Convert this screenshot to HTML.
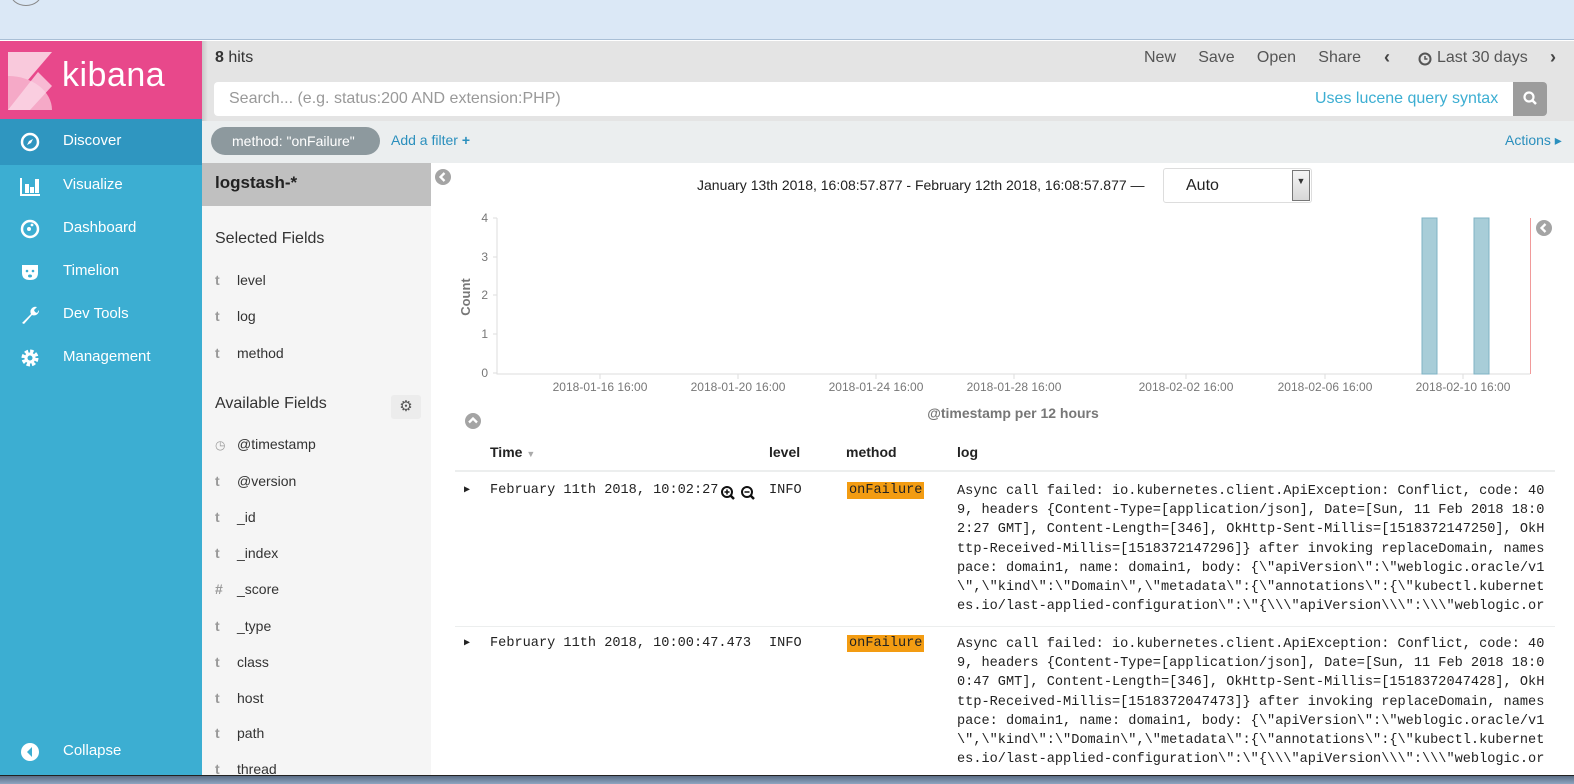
<!DOCTYPE html>
<html><head><meta charset="utf-8"><style>
*{margin:0;padding:0;box-sizing:border-box}
body{width:1574px;height:784px;overflow:hidden;position:relative;font-family:"Liberation Sans",sans-serif;background:#fff;color:#333}
.a{position:absolute}
.nav{left:0;width:202px;height:46px;color:#fff;font-size:15px}
.nav span{position:absolute;left:63px;top:13px}
.nav svg{position:absolute;left:20px;top:13px}
.fld{left:215px;font-size:14px;color:#333}
.fld b{display:inline-block;width:22px;color:#999;font-weight:bold}
.mono{font-family:"Liberation Mono",monospace;font-size:13.6px;color:#222}
.log{left:957px;white-space:pre;line-height:19.2px}
.tag{background:#f39c12;padding:1px 2px}
</style></head><body>
<div class="a" style="left:0;top:0;width:1574px;height:40px;background:#dbe8f6;border-bottom:1px solid #a9bfd6"></div>
<div class="a" style="left:10px;top:-20px;width:32px;height:26px;border:1px solid #888;border-radius:50%"></div>
<div class="a" style="left:0;top:41px;width:202px;height:734px;background:#3caed2"></div>
<div class="a" style="left:0;top:41px;width:202px;height:78px;background:#e8488b"></div>
<svg class="a" style="left:8px;top:52px" width="44" height="58"><polygon points="0,0 44,0 20,28 0,28" fill="#f9c9dc"/><path d="M0,24 A44,34 0 0 1 44,58 L0,58Z" fill="#f5a9c7"/><polygon points="0,58 30,20 44,34 22,58" fill="#fbd7e6" opacity=".8"/></svg>
<div class="a" style="left:62px;top:56px;font-size:34px;color:#fff;letter-spacing:0.5px">kibana</div>
<div class="a nav" style="top:119px;background:#2f96c0"><svg width="20" height="20"><circle cx="10" cy="10" r="8" fill="none" stroke="#fff" stroke-width="2.5"/><path d="M13,7 L11,11 L7,13 L9,9Z" fill="#fff"/></svg><span>Discover</span></div>
<div class="a nav" style="top:163px"><svg width="20" height="20"><path d="M1,2V19H20" fill="none" stroke="#fff" stroke-width="2"/><rect x="5" y="8" width="4" height="9" fill="#fff"/><rect x="10" y="11" width="4" height="6" fill="#fff"/><rect x="15" y="3" width="4" height="14" fill="#fff"/></svg><span>Visualize</span></div>
<div class="a nav" style="top:206px"><svg width="20" height="20"><circle cx="10" cy="10" r="8" fill="none" stroke="#fff" stroke-width="2.5"/><circle cx="9" cy="10" r="2" fill="#fff"/><circle cx="12" cy="6" r="1.4" fill="#fff"/></svg><span>Dashboard</span></div>
<div class="a nav" style="top:249px"><svg width="20" height="20"><path d="M2,3 H18 V11 Q18,18 10,18 Q2,18 2,11Z" fill="#fff"/><circle cx="7" cy="9" r="1.3" fill="#3caed2"/><circle cx="13" cy="9" r="1.3" fill="#3caed2"/><ellipse cx="10" cy="14" rx="2" ry="1.5" fill="#3caed2"/></svg><span>Timelion</span></div>
<div class="a nav" style="top:292px"><svg width="20" height="20"><path d="M2,18 L11,9 A5,5 0 0 1 17,2 L14,5 L15,7 L17,8 L19,5 A5,5 0 0 1 12,10 L4,19Z" fill="#fff"/></svg><span>Dev Tools</span></div>
<div class="a nav" style="top:335px"><svg width="20" height="20"><circle cx="10" cy="10" r="6" fill="none" stroke="#fff" stroke-width="5" stroke-dasharray="3 1.7"/><circle cx="10" cy="10" r="5.5" fill="#fff"/><circle cx="10" cy="10" r="2.5" fill="#3caed2"/></svg><span>Management</span></div>
<div class="a nav" style="top:729px"><svg width="20" height="20"><circle cx="10" cy="10" r="9" fill="#fff"/><path d="M12,5 L7,10 L12,15Z" fill="#3caed2"/></svg><span>Collapse</span></div>
<div class="a" style="left:202px;top:41px;width:1372px;height:80px;background:#e4e4e4"></div>
<div class="a" style="left:202px;top:41px;width:6px;height:734px;background:linear-gradient(90deg,rgba(0,0,0,.12),rgba(0,0,0,0))"></div>
<div class="a" style="left:215px;top:49px;font-size:16px;color:#333"><b>8</b> hits</div>
<div class="a" style="left:1144px;top:49px;font-size:16px;color:#555">New&nbsp;&nbsp;&nbsp;&nbsp;&nbsp;Save&nbsp;&nbsp;&nbsp;&nbsp;&nbsp;Open&nbsp;&nbsp;&nbsp;&nbsp;&nbsp;Share</div>
<div class="a" style="left:1384px;top:47px;font-size:18px;color:#444;font-weight:bold">‹</div>
<svg class="a" style="left:1418px;top:52px" width="14" height="14"><circle cx="7" cy="7" r="5.5" fill="none" stroke="#555" stroke-width="2"/><path d="M7,4V7H9.5" stroke="#555" stroke-width="1.5" fill="none"/></svg>
<div class="a" style="left:1437px;top:49px;font-size:16px;color:#555">Last 30 days</div>
<div class="a" style="left:1550px;top:47px;font-size:18px;color:#444;font-weight:bold">›</div>
<div class="a" style="left:214px;top:82px;width:1332px;height:34px;background:#fff;border-radius:4px"></div>
<div class="a" style="left:229px;top:90px;font-size:16px;color:#999">Search... (e.g. status:200 AND extension:PHP)</div>
<div class="a" style="left:1315px;top:90px;font-size:16px;color:#3caed2">Uses lucene query syntax</div>
<div class="a" style="left:1513px;top:82px;width:34px;height:34px;background:#9c9c9c;border-radius:0 4px 4px 0"></div>
<svg class="a" style="left:1522px;top:90px" width="16" height="16"><circle cx="7" cy="7" r="4.5" fill="none" stroke="#fff" stroke-width="2.2"/><path d="M10,10L14,14" stroke="#fff" stroke-width="2.5"/></svg>
<div class="a" style="left:202px;top:121px;width:1372px;height:42px;background:#ebeeef"></div>
<div class="a" style="left:211px;top:127px;width:169px;height:28px;background:#8d999e;border-radius:14px;color:#fff;font-size:14px;padding:6px 0 0 21px">method: "onFailure"</div>
<div class="a" style="left:391px;top:132px;font-size:14px;color:#2a8fbd">Add a filter <b>+</b></div>
<div class="a" style="left:1505px;top:132px;font-size:14px;color:#2a8fbd">Actions ▸</div>
<div class="a" style="left:202px;top:163px;width:229px;height:612px;background:#f5f5f5"></div>
<div class="a" style="left:202px;top:163px;width:229px;height:43px;background:#c0c0c0"></div>
<div class="a" style="left:215px;top:173px;font-size:17px;font-weight:bold;color:#222">logstash-*</div>
<div class="a" style="left:215px;top:230px;font-size:16px;color:#333">Selected Fields</div>
<div class="a fld" style="top:272px"><b>t</b>level</div>
<div class="a fld" style="top:308px"><b>t</b>log</div>
<div class="a fld" style="top:345px"><b>t</b>method</div>
<div class="a" style="left:215px;top:395px;font-size:16px;color:#333">Available Fields</div>
<div class="a" style="left:391px;top:395px;width:30px;height:24px;background:#ececec;border-radius:3px;text-align:center;font-size:15px;color:#555;line-height:24px">⚙</div>
<div class="a fld" style="top:436px"><b style="font-weight:normal;font-size:12px">◷</b>@timestamp</div>
<div class="a fld" style="top:473px"><b>t</b>@version</div>
<div class="a fld" style="top:509px"><b>t</b>_id</div>
<div class="a fld" style="top:545px"><b>t</b>_index</div>
<div class="a fld" style="top:581px"><b>#</b>_score</div>
<div class="a fld" style="top:618px"><b>t</b>_type</div>
<div class="a fld" style="top:654px"><b>t</b>class</div>
<div class="a fld" style="top:690px"><b>t</b>host</div>
<div class="a fld" style="top:725px"><b>t</b>path</div>
<div class="a fld" style="top:761px"><b>t</b>thread</div>
<svg class="a" style="left:434px;top:168px" width="18" height="18"><circle cx="9" cy="9" r="8" fill="#a4a4a4"/><path d="M10.5,5L6.5,9L10.5,13" stroke="#fff" stroke-width="2.3" fill="none"/></svg>
<svg class="a" style="left:1535px;top:219px" width="18" height="18"><circle cx="9" cy="9" r="8" fill="#a4a4a4"/><path d="M10.5,5L6.5,9L10.5,13" stroke="#fff" stroke-width="2.3" fill="none"/></svg>
<div class="a" style="left:697px;top:177px;font-size:14px;color:#222">January 13th 2018, 16:08:57.877 - February 12th 2018, 16:08:57.877 —</div>
<div class="a" style="left:1163px;top:168px;width:149px;height:35px;border:1px solid #ddd;border-radius:3px;background:#fff"></div>
<div class="a" style="left:1186px;top:177px;font-size:16px;color:#222">Auto</div>
<div class="a" style="left:1292px;top:170px;width:18px;height:31px;border:1px solid #777;background:linear-gradient(#f4f4f4,#d8d8d8);font-size:9px;text-align:center;padding-top:5px">▼</div>
<svg class="a" style="left:440px;top:205px" width="1134" height="220">
<g font-family="Liberation Sans" font-size="12" fill="#777" text-anchor="end">
<text x="48" y="17">4</text><text x="48" y="56">3</text><text x="48" y="94">2</text><text x="48" y="133">1</text><text x="48" y="172">0</text></g>
<path d="M57,13V169H1090" stroke="#ddd" fill="none"/>
<g stroke="#ddd"><path d="M53,13H57M53,52H57M53,90H57M53,129H57M53,168H57"/><path d="M160,169v5M298,169v5M436,169v5M574,169v5M746,169v5M885,169v5M1023,169v5"/></g>
<text x="30" y="92" font-size="13" font-weight="bold" fill="#777" transform="rotate(-90 30 92)" text-anchor="middle">Count</text>
<rect x="982" y="13" width="15" height="156" fill="#a8cdd8" stroke="#7fb3c4"/>
<rect x="1034" y="13" width="15" height="156" fill="#a8cdd8" stroke="#7fb3c4"/>
<path d="M1090.5,13V169" stroke="#f19a9a"/>
<g font-family="Liberation Sans" font-size="12" fill="#777" text-anchor="middle">
<text x="160" y="186">2018-01-16 16:00</text><text x="298" y="186">2018-01-20 16:00</text><text x="436" y="186">2018-01-24 16:00</text><text x="574" y="186">2018-01-28 16:00</text><text x="746" y="186">2018-02-02 16:00</text><text x="885" y="186">2018-02-06 16:00</text><text x="1023" y="186">2018-02-10 16:00</text></g>
<text x="573" y="213" font-size="14" font-weight="bold" fill="#777" text-anchor="middle">@timestamp per 12 hours</text>
</svg>
<svg class="a" style="left:464px;top:412px" width="18" height="18"><circle cx="9" cy="9" r="8" fill="#a4a4a4"/><path d="M5,10.5L9,6.5L13,10.5" stroke="#fff" stroke-width="2.3" fill="none"/></svg>
<div class="a" style="left:490px;top:444px;font-size:14px;font-weight:bold;color:#222">Time <span style="color:#aaa;font-size:9px">▼</span></div>
<div class="a" style="left:769px;top:444px;font-size:14px;font-weight:bold;color:#222">level</div>
<div class="a" style="left:846px;top:444px;font-size:14px;font-weight:bold;color:#222">method</div>
<div class="a" style="left:957px;top:444px;font-size:14px;font-weight:bold;color:#222">log</div>
<div class="a" style="left:455px;top:470px;width:1100px;height:2px;background:#eceeee"></div>
<div class="a" style="left:455px;top:626px;width:1100px;height:1px;background:#eceeee"></div>
<div class="a mono" style="left:464px;top:484px;font-size:10px">▶</div>
<div class="a mono" style="left:490px;top:483px">February 11th 2018, 10:02:27</div>
<svg class="a" style="left:720px;top:485px" width="40" height="18"><circle cx="7" cy="7" r="5" fill="none" stroke="#111" stroke-width="2"/><path d="M10.5,10.5L14,14" stroke="#111" stroke-width="2.5"/><path d="M4.5,7H9.5M7,4.5V9.5" stroke="#111" stroke-width="1.5"/><circle cx="27" cy="7" r="5" fill="none" stroke="#111" stroke-width="2"/><path d="M30.5,10.5L34,14" stroke="#111" stroke-width="2.5"/><path d="M24.5,7H29.5" stroke="#111" stroke-width="1.5"/></svg>
<div class="a mono" style="left:769px;top:483px">INFO</div>
<div class="a mono" style="left:847px;top:483px"><span class="tag">onFailure</span></div>
<div class="a mono log" style="top:482px">Async call failed: io.kubernetes.client.ApiException: Conflict, code: 40
9, headers {Content-Type=[application/json], Date=[Sun, 11 Feb 2018 18:0
2:27 GMT], Content-Length=[346], OkHttp-Sent-Millis=[1518372147250], OkH
ttp-Received-Millis=[1518372147296]} after invoking replaceDomain, names
pace: domain1, name: domain1, body: {\"apiVersion\":\"weblogic.oracle/v1
\",\"kind\":\"Domain\",\"metadata\":{\"annotations\":{\"kubectl.kubernet
es.io/last-applied-configuration\":\"{\\\"apiVersion\\\":\\\"weblogic.or</div>
<div class="a mono" style="left:464px;top:637px;font-size:10px">▶</div>
<div class="a mono" style="left:490px;top:636px">February 11th 2018, 10:00:47.473</div>
<div class="a mono" style="left:769px;top:636px">INFO</div>
<div class="a mono" style="left:847px;top:636px"><span class="tag">onFailure</span></div>
<div class="a mono log" style="top:635px">Async call failed: io.kubernetes.client.ApiException: Conflict, code: 40
9, headers {Content-Type=[application/json], Date=[Sun, 11 Feb 2018 18:0
0:47 GMT], Content-Length=[346], OkHttp-Sent-Millis=[1518372047428], OkH
ttp-Received-Millis=[1518372047473]} after invoking replaceDomain, names
pace: domain1, name: domain1, body: {\"apiVersion\":\"weblogic.oracle/v1
\",\"kind\":\"Domain\",\"metadata\":{\"annotations\":{\"kubectl.kubernet
es.io/last-applied-configuration\":\"{\\\"apiVersion\\\":\\\"weblogic.or</div>
<div class="a" style="left:0;top:775px;width:1574px;height:9px;background:linear-gradient(#5a6d85,#8ea5c0);border-top:1px solid #222"></div>
</body></html>
